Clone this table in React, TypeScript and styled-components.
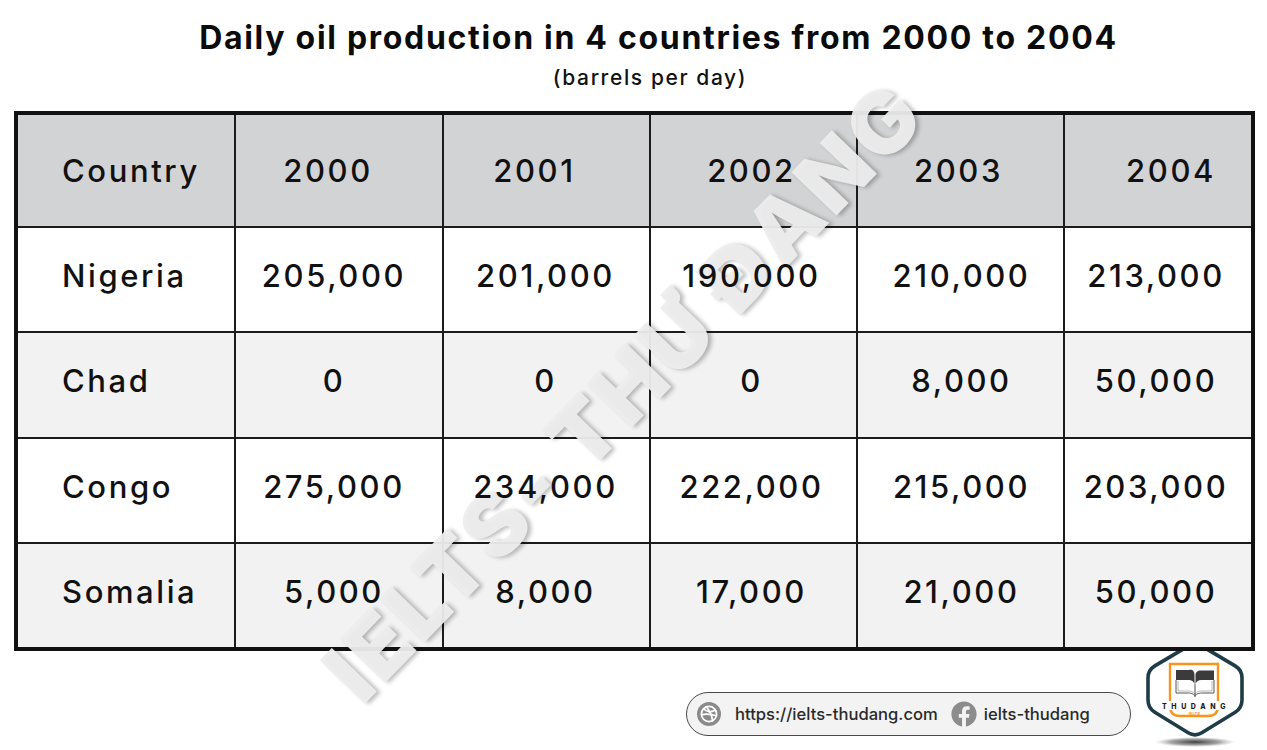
import React from "react";
import styled, { createGlobalStyle } from "styled-components";
import { FaFacebook } from "react-icons/fa";

const GlobalStyle = createGlobalStyle`
  html, body { margin: 0; padding: 0; background: #ffffff; }
  body { font-family: Inter, "Noto Sans", "DejaVu Sans", sans-serif; color: #111111; }
  * { box-sizing: border-box; }
`;

const Page = styled.div`
  width: 1267px;
  height: 750px;
  overflow: hidden;
  display: flex;
  flex-direction: column;
`;

const Header = styled.header`
  display: flex;
  flex-direction: column;
  align-items: center;
  padding-top: 22px;
  padding-left: 50px;
`;

const Title = styled.h1`
  margin: 0;
  font-size: 32px;
  line-height: 32px;
  font-weight: 700;
  letter-spacing: 1.7px;
  color: #0b0b0b;
  white-space: nowrap;
`;

const Subtitle = styled.div`
  margin-top: 13px;
  margin-right: 17px;
  font-size: 21px;
  line-height: 22px;
  font-weight: 500;
  letter-spacing: 1.6px;
  color: #111;
`;

const TableFrame = styled.div`
  position: relative;
  isolation: isolate;
  margin: 22px 0 0 14px;
  width: 1241px;
  border: 4px solid #111;
`;

const Grid = styled.table`
  width: 100%;
  border-collapse: collapse;
  border-style: hidden;
  table-layout: fixed;
`;

const Row = styled.tr<{ $h: number; $bg: string }>`
  height: ${(p) => p.$h}px;
  background: ${(p) => p.$bg};
`;

const Cell = styled.td<{ $left?: boolean; $shift?: number; $head?: boolean }>`
  border: 2px solid #1c1c1c;
  padding: 0;
  padding-bottom: ${(p) => (p.$head ? 0 : 9)}px;
  padding-left: ${(p) => (p.$left ? 44 : Math.max(0, 2 * (p.$shift || 0)))}px;
  padding-right: ${(p) => (p.$left ? 0 : Math.max(0, -2 * (p.$shift || 0)))}px;
  text-align: ${(p) => (p.$left ? "left" : "center")};
  vertical-align: middle;
  font-size: 31px;
  font-weight: 500;
  letter-spacing: 2.6px;
  color: #111;
  white-space: nowrap;
`;

const CellText = styled.span`
  position: relative;
  z-index: 1;
`;

const Watermark = styled.div`
  position: absolute;
  z-index: 0;
  left: 606px;
  top: 276px;
  transform: translate(-50%, -50%) rotate(-46deg);
  white-space: nowrap;
  font-size: 86px;
  line-height: 1;
  font-weight: 900;
  letter-spacing: 4px;
  color: rgba(237, 237, 237, 0.95);
  text-shadow: 2px 3px 4px rgba(0, 0, 0, 0.27);
  pointer-events: none;
`;

const Footer = styled.footer`
  display: flex;
  justify-content: flex-end;
  align-items: flex-start;
  gap: 14px;
  padding-right: 22px;
`;

const Pill = styled.div`
  margin-top: 41px;
  width: 445px;
  height: 44px;
  border: 1.5px solid #4a4a4a;
  border-radius: 22px;
  background: #f3f3f3;
  display: flex;
  align-items: center;
  padding-left: 10px;
`;

const LinkText = styled.span<{ $gap: number }>`
  margin-left: ${(p) => p.$gap}px;
  font-size: 16.6px;
  font-weight: 500;
  color: #2a2a2a;
  white-space: nowrap;
`;

const FbWrap = styled.span`
  display: flex;
  margin-left: 13px;
  color: #8c8c8c;
`;

const LogoBox = styled.div`
  margin-top: -13px;
  width: 100px;
  height: 112px;
`;

function roundedPolygon(pts: [number, number][], r: number): string {
  const n = pts.length;
  let d = "";
  for (let i = 0; i < n; i++) {
    const p = pts[i];
    const prev = pts[(i - 1 + n) % n];
    const next = pts[(i + 1) % n];
    const v1 = [prev[0] - p[0], prev[1] - p[1]];
    const v2 = [next[0] - p[0], next[1] - p[1]];
    const l1 = Math.hypot(v1[0], v1[1]);
    const l2 = Math.hypot(v2[0], v2[1]);
    const a = [p[0] + (v1[0] / l1) * r, p[1] + (v1[1] / l1) * r];
    const b = [p[0] + (v2[0] / l2) * r, p[1] + (v2[1] / l2) * r];
    d += `${i === 0 ? "M" : "L"}${a[0].toFixed(2)},${a[1].toFixed(2)} Q${p[0]},${p[1]} ${b[0].toFixed(2)},${b[1].toFixed(2)} `;
  }
  return d + "Z";
}

const hexPath = roundedPolygon(
  [
    [50, 4],
    [97, 32],
    [97, 70],
    [50, 99],
    [3, 70],
    [3, 32],
  ],
  8
);

const Logo = () => (
  <svg width="100" height="112" viewBox="0 0 100 112">
    <defs>
      <radialGradient id="sh" cx="50%" cy="50%" r="50%">
        <stop offset="0%" stopColor="#333" stopOpacity="0.95" />
        <stop offset="60%" stopColor="#666" stopOpacity="0.6" />
        <stop offset="100%" stopColor="#999" stopOpacity="0" />
      </radialGradient>
    </defs>
    <ellipse cx="50" cy="104" rx="40" ry="5" fill="url(#sh)" />
    <path d={hexPath} fill="#ffffff" stroke="#1f3d48" strokeWidth="3.6" />
    <path d="M25,26 H73 V68 Q73,78 63,78 H35 Q25,78 25,68 Z" fill="none" stroke="#f7941d" strokeWidth="2.4" />
    <path d="M31,32 H44 C47.5,31 49.5,33 49.5,37 V46 C48.5,43.5 46.5,42 44,42 H31 Z" fill="#3b3b3b" />
    <path d="M69,32.5 H56 C52.5,32.5 50.5,34 50.5,37.5 V46 C51.5,43.5 53.5,42 56,42 H69 Z" fill="#3b3b3b" />
    <path d="M31,42 V55 H43.5 C46.5,55 50,56.5 50,58.5 C50,56.5 53.5,55 56.5,55 H69 V42" fill="none" stroke="#555" strokeWidth="1" />
    <path d="M33,43 V53 H43.5 C46.5,53 50,54.5 50,56.5 C50,54.5 53.5,53 56.5,53 H67 V43" fill="none" stroke="#888" strokeWidth="0.6" />
    <line x1="50" y1="46" x2="50" y2="58.5" stroke="#555" strokeWidth="1" />
    <rect x="15" y="63" width="68" height="9" fill="#ffffff" />
    <text x="51" y="70.5" textAnchor="middle" fontFamily="Inter, sans-serif" fontWeight="800" fontSize="7" letterSpacing="4.6" fill="#1d1d1d">
      THUDANG
    </text>
    <text x="49.5" y="77" textAnchor="middle" fontFamily="Inter, sans-serif" fontWeight="800" fontSize="3.6" letterSpacing="0.4" fill="#f7941d">
      IELTS
    </text>
  </svg>
);

const DribbbleIcon = () => (
  <svg width="24" height="24" viewBox="0 0 24 24">
    <circle cx="12" cy="12" r="12" fill="#8a8a8a" />
    <g fill="none" stroke="#ffffff" strokeWidth="1.7" strokeLinecap="round">
      <circle cx="12" cy="12" r="7.6" />
      <path d="M6.6 6.8 C9.5 10.2 14.6 10.4 17.6 8.2" />
      <path d="M9.4 4.9 C12.6 8.6 14.9 13.6 15.6 18.8" />
      <path d="M4.5 12.9 C9 11.6 14.5 12.3 19.5 13.8" />
    </g>
  </svg>
);

const colWidths = [217, 208, 207, 207, 207, 187];

const headers = ["Country", "2000", "2001", "2002", "2003", "2004"];
const headShift = [0, -11, -12, -2, -2, 13];
const bodyShift = [0, -5, -1, -2, 1, -2];

const rows: { name: string; values: string[]; h: number; bg: string }[] = [
  { name: "Nigeria", values: ["205,000", "201,000", "190,000", "210,000", "213,000"], h: 105, bg: "#ffffff" },
  { name: "Chad", values: ["0", "0", "0", "8,000", "50,000"], h: 106, bg: "#f2f2f2" },
  { name: "Congo", values: ["275,000", "234,000", "222,000", "215,000", "203,000"], h: 105, bg: "#ffffff" },
  { name: "Somalia", values: ["5,000", "8,000", "17,000", "21,000", "50,000"], h: 104, bg: "#f2f2f2" },
];

export default function App() {
  return (
    <>
      <GlobalStyle />
      <Page>
        <Header>
          <Title>Daily oil production in 4 countries from 2000 to 2004</Title>
          <Subtitle>(barrels per day)</Subtitle>
        </Header>

        <TableFrame>
          <Grid>
            <colgroup>
              {colWidths.map((w, i) => (
                <col key={i} style={{ width: w }} />
              ))}
            </colgroup>
            <thead>
              <Row $h={112} $bg="#d1d3d4">
                {headers.map((h, i) => (
                  <Cell key={h} as="th" $head $left={i === 0} $shift={headShift[i]}>
                    <CellText>{h}</CellText>
                  </Cell>
                ))}
              </Row>
            </thead>
            <tbody>
              {rows.map((r) => (
                <Row key={r.name} $h={r.h} $bg={r.bg}>
                  <Cell $left>
                    <CellText>{r.name}</CellText>
                  </Cell>
                  {r.values.map((v, i) => (
                    <Cell key={i} $shift={bodyShift[i + 1]}>
                      <CellText>{v}</CellText>
                    </Cell>
                  ))}
                </Row>
              ))}
            </tbody>
          </Grid>
          <Watermark>IELTS- THƯ ĐANG</Watermark>
        </TableFrame>

        <Footer>
          <Pill>
            <DribbbleIcon />
            <LinkText $gap={14}>https://ielts-thudang.com</LinkText>
            <FbWrap>
              <FaFacebook size={26} />
            </FbWrap>
            <LinkText $gap={7}>ielts-thudang</LinkText>
          </Pill>
          <LogoBox>
            <Logo />
          </LogoBox>
        </Footer>
      </Page>
    </>
  );
}
